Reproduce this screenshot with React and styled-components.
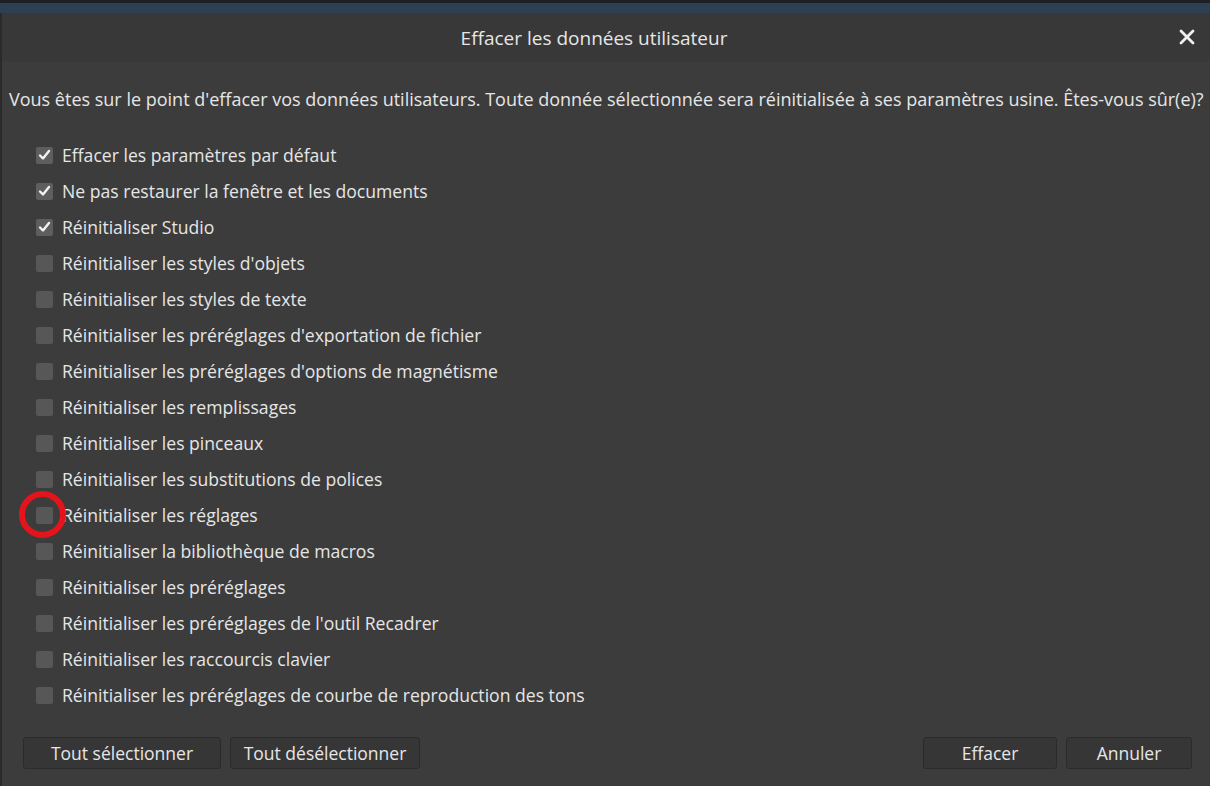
import React from 'react';
import styled, { createGlobalStyle } from 'styled-components';

const GlobalStyle = createGlobalStyle`
  html, body {
    margin: 0;
    padding: 0;
    background: #3c3c3c;
  }
  body {
    font-family: "Open Sans", "Noto Sans", sans-serif;
    color: #e6e6e6;
  }
`;

const OPTIONS = [
  { label: 'Effacer les paramètres par défaut', checked: true },
  { label: 'Ne pas restaurer la fenêtre et les documents', checked: true },
  { label: 'Réinitialiser Studio', checked: true },
  { label: "Réinitialiser les styles d'objets" },
  { label: 'Réinitialiser les styles de texte' },
  { label: "Réinitialiser les préréglages d'exportation de fichier" },
  { label: "Réinitialiser les préréglages d'options de magnétisme" },
  { label: 'Réinitialiser les remplissages' },
  { label: 'Réinitialiser les pinceaux' },
  { label: 'Réinitialiser les substitutions de polices' },
  { label: 'Réinitialiser les réglages', marked: true },
  { label: 'Réinitialiser la bibliothèque de macros' },
  { label: 'Réinitialiser les préréglages' },
  { label: "Réinitialiser les préréglages de l'outil Recadrer" },
  { label: 'Réinitialiser les raccourcis clavier' },
  { label: 'Réinitialiser les préréglages de courbe de reproduction des tons' },
];

const Window = styled.div`
  width: 1210px;
  height: 786px;
  display: flex;
  flex-direction: column;
  background: #3c3c3c;
  overflow: hidden;
`;

const TopEdge = styled.div`
  height: 3px;
  background: #1f2023;
  flex-shrink: 0;
`;

const AccentBar = styled.div`
  height: 10px;
  background: #2d3f53;
  flex-shrink: 0;
`;

const Frame = styled.div`
  flex: 1;
  display: flex;
  flex-direction: column;
  border-left: 2px solid #2a2a2a;
`;

const TitleBar = styled.div`
  height: 49px;
  flex-shrink: 0;
  background: #383838;
  display: flex;
  align-items: center;
  justify-content: center;
  padding-right: 24px;
  position: relative;
  font-size: 19px;
`;

const CloseButton = styled.button`
  position: absolute;
  right: 14px;
  top: 15px;
  width: 18px;
  height: 18px;
  padding: 0;
  border: 0;
  background: transparent;
  display: flex;
  align-items: center;
  justify-content: center;
`;

const Body = styled.div`
  flex: 1;
  display: flex;
  flex-direction: column;
  padding: 25px 0 17px 7px;
`;

const Intro = styled.p`
  margin: 0;
  font-size: 18px;
  line-height: 24px;
  white-space: nowrap;
`;

const List = styled.ul`
  list-style: none;
  margin: 26px 0 0;
  padding: 0 0 0 27px;
`;

const Row = styled.li`
  height: 36px;
  display: flex;
  align-items: center;
  gap: 9px;
  font-size: 17.6px;
  position: relative;
`;

const Box = styled.span`
  width: 17px;
  height: 17px;
  border-radius: 2px;
  background: ${p => (p.$checked ? '#5e5e5e' : '#575757')};
  display: flex;
  align-items: center;
  justify-content: center;
  flex-shrink: 0;
`;

const Marker = styled.span`
  position: absolute;
  left: -17px;
  top: -6px;
  width: 35px;
  height: 35px;
  border: 6.5px solid #e3141c;
  border-radius: 50%;
  pointer-events: none;
`;

const Footer = styled.div`
  margin-top: auto;
  display: flex;
  align-items: center;
  padding: 0 18px 0 14px;
  gap: 9px;
`;

const Button = styled.button`
  height: 32px;
  width: ${p => p.$w}px;
  background: #363636;
  border: 1px solid #2b2b2b;
  border-radius: 3px;
  color: #e6e6e6;
  font-family: "Open Sans", "Noto Sans", sans-serif;
  font-size: 17.5px;
  padding: 0;
`;

const Spacer = styled.div`
  flex: 1;
`;

const Check = () => (
  <svg width="13" height="12" viewBox="0 0 13 12">
    <path d="M2 6.5 L5 9.5 L11 2" fill="none" stroke="#f2f2f2" strokeWidth="2.4" strokeLinecap="round" strokeLinejoin="round" />
  </svg>
);

export default function App() {
  return (
    <>
      <GlobalStyle />
      <Window>
        <TopEdge />
        <AccentBar />
        <Frame>
          <TitleBar>
            Effacer les données utilisateur
            <CloseButton aria-label="Fermer">
              <svg width="16" height="16" viewBox="0 0 16 16">
                <path d="M2 2 L14 14 M14 2 L2 14" stroke="#f0f0f0" strokeWidth="2.8" strokeLinecap="round" />
              </svg>
            </CloseButton>
          </TitleBar>
          <Body>
            <Intro>
              Vous êtes sur le point d'effacer vos données utilisateurs. Toute donnée sélectionnée sera réinitialisée à ses paramètres usine. Êtes-vous sûr(e)?
            </Intro>
            <List>
              {OPTIONS.map(o => (
                <Row key={o.label}>
                  <Box $checked={o.checked}>{o.checked && <Check />}</Box>
                  {o.label}
                  {o.marked && <Marker />}
                </Row>
              ))}
            </List>
            <Footer>
              <Button $w={198}>Tout sélectionner</Button>
              <Button $w={190}>Tout désélectionner</Button>
              <Spacer />
              <Button $w={134}>Effacer</Button>
              <Button $w={126}>Annuler</Button>
            </Footer>
          </Body>
        </Frame>
      </Window>
    </>
  );
}
